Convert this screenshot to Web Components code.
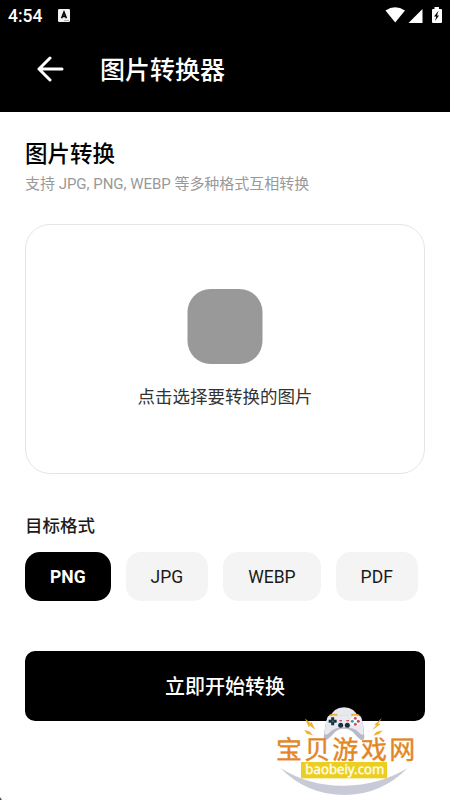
<!DOCTYPE html>
<html lang="zh-CN">
<head>
<meta charset="utf-8">
<title>图片转换器</title>
<style>
html,body{margin:0;height:100%;overflow:hidden;background:#fff}
body{font-family:Roboto,"Noto Sans CJK SC",sans-serif}
</style>
</head>
<body>
<converter-app></converter-app>
<script>
const define = (name, html) => {
  const t = document.createElement('template');
  t.innerHTML = html;
  customElements.define(name, class extends HTMLElement {
    constructor() {
      super();
      this.attachShadow({mode: 'open'}).appendChild(t.content.cloneNode(true));
    }
  });
};

define('status-bar', `<style>
:host{display:flex;box-sizing:border-box;height:30px;padding:0 8px 0 8px;align-items:center;justify-content:space-between;background:#000;color:#fff;font-weight:500;font-size:17.5px;line-height:30px}
div{display:flex;align-items:center;height:30px}
span{padding-top:2px}
svg{display:block}
</style>
<div><span>4:54</span>
<svg width="12" height="13" viewBox="0 0 12 13" style="margin-left:16px"><rect width="12" height="13" rx="1.3" fill="#f4f4f4"/><path d="M3.6 9.2 6 3.2l2.4 6M4.4 7.4h3.2" fill="none" stroke="#000" stroke-width="1.6"/><path d="M6 11.6h5" stroke="#999" stroke-width=".8"/></svg></div>
<svg width="57" height="18" viewBox="0 0 57 18"><path d="M.5 4.500Q10 -2 20 4.500L10.200 16.500Z" fill="#fff"/><path d="M23.500 17 37.500 3V17Z" fill="#fff"/><path d="M47.500 3h2V1h4.500v2h2q1 0 1 1v12q0 1-1 1h-8q-1 0-1-1V4Z" fill="#fff"/><path d="M53.500 4.800 49 10.500h2.300L50 15l4-5.500h-2Z" fill="#000"/></svg>`);

define('app-header', `<style>
:host{display:flex;box-sizing:border-box;height:82px;padding:0 0 4px 37px;align-items:center;background:#000;color:#fff}
h1{margin:0 0 0 36px;padding-top:4px;font-size:25px;line-height:36px;font-weight:500}
svg{display:block}
</style>
<svg width="27" height="26" viewBox="0 0 27 26"><path d="M25 13H2M13 2 2 13l11 11" fill="none" stroke="#fff" stroke-width="3" stroke-linecap="round" stroke-linejoin="round"/></svg>
<h1><slot></slot></h1>`);

define('page-intro', `<style>
:host{display:block}
h2{margin:0;padding-top:1px;font-size:22.5px;line-height:32px;font-weight:500;color:#000}
p{margin:0;padding-top:3px;font-size:15px;line-height:22px;color:#999;letter-spacing:-.02px}
</style><h2><slot name="title"></slot></h2><p><slot></slot></p>`);

define('upload-box', `<style>
:host{display:flex;box-sizing:border-box;height:250px;border:1.25px solid #e5e5e5;border-radius:25px;flex-direction:column;align-items:center;padding-top:64.5px;color:#333;font-size:17.5px;line-height:26px}
i{width:75px;height:75px;border-radius:23px;background:#999;margin-bottom:20px;transform:translateX(-.5px)}
</style><i></i><span><slot></slot></span>`);

define('format-chip', `<style>
:host{display:block;box-sizing:border-box;height:49px;padding:0 25px;border-radius:15px;background:#f4f4f4;color:#1a1a1a;font-size:17.5px;line-height:50px}
:host([selected]){background:#000;color:#fff;font-weight:700}
</style><slot></slot>`);

define('format-picker', `<style>
:host{display:block}
h3{margin:0 0 13px;padding-top:1px;font-size:17.5px;line-height:26px;font-weight:500;color:#1a1a1a}
div{display:flex;gap:15px}
</style><h3><slot name="label"></slot></h3><div><slot></slot></div>`);

define('primary-button', `<style>
:host{display:block}
button{display:block;width:100%;height:70px;border:0;border-radius:10px;padding:2px 0 0;background:#000;color:#fff;font:500 20px/68px Roboto,"Noto Sans CJK SC",sans-serif}
</style><button><slot></slot></button>`);

define('site-mark', `<style>
:host{position:absolute;left:265px;top:695px;width:160px;height:105px}
svg{display:block}
text{font-weight:400;text-rendering:geometricPrecision}
</style>
<svg width="160" height="105" viewBox="0 0 480 315">
<path d="M46 219Q134 274 238 272Q342 271 428 219Q348 300 238 300Q126 300 46 219Z" fill="#c8cad7"/>
<path d="M195 68Q204 38 237 37Q270 38 280 68Z" fill="#e9e9ed"/>
<path d="M188 67Q199 53 219 60Q237 65 255 60Q277 53 288 67Q297 88 298 128Q297 137 287 134Q278 128 264 111Q253 101 237 101Q220 101 210 111Q193 131 183 135Q176 137 176 128Q180 86 188 67Z" fill="#b9bac9"/>
<path d="M188 66Q199 52 219 59Q237 64 255 59Q277 52 288 66Q295 86 296 118Q289 122 277 108Q260 96 237 97Q214 96 198 109Q185 123 179 118Q181 84 188 66Z" fill="#e9e9f0"/>
<path d="M195 62q7-5 22-2M259 60q14-3 22 2" fill="none" stroke="#e7ad3e" stroke-width="6"/>
<path d="M203 67v24M191 79h24" stroke="#193341" stroke-width="9"/><circle cx="203" cy="79" r="3" fill="#526c78"/>
<circle cx="271" cy="79" r="15" fill="#fff"/><circle cx="271" cy="70" r="4.500" fill="#d84c59"/><circle cx="271" cy="88" r="4.500" fill="#d84c59"/><circle cx="262" cy="79" r="4.500" fill="#399aa8"/><circle cx="280" cy="79" r="4.500" fill="#b94c65"/>
<circle cx="227" cy="91" r="7.500" fill="#19313c"/><circle cx="247" cy="91" r="7.500" fill="#19313c"/><path d="M223 77h8M244 77h8" stroke="#d44c5b" stroke-width="4"/>
<g fill="#f3b51d" stroke="#e9962c" stroke-width="1"><path d="m121 72 17 14 1-5 10 21-15-11-2 5Z"/><path d="m349 71-20 18 6 1-11 13 21-15-6-2Z"/><path d="m119 106 15 4 8 9-16-3Z"/><path d="m351 107-18 5-6 9 16-5Z"/></g>
<g font-family="Noto Sans CJK SC, sans-serif" font-size="78" fill="#e28625" stroke="#e28625" stroke-width="1.2"><text x="33 118 202 288 373" y="191">宝贝游戏网</text></g>
<rect x="108" y="201" width="258" height="49" fill="#ebcf20"/>
<text x="121" y="237" textLength="237" lengthAdjust="spacingAndGlyphs" font-family="Noto Sans, sans-serif" font-size="41" fill="#fffdf1" stroke="#fffdf1" stroke-width="1">baobeiy.com</text>
</svg>`);

define('converter-app', `<style>
:host{display:block;position:relative;width:450px;height:800px;background:#fff;overflow:hidden}
main{padding:25px 25px 0}
upload-box{margin-top:28.500px}
format-picker{margin-top:38.500px}
primary-button{margin-top:50px}
.corner{position:absolute;left:0;bottom:0;display:block}
</style>
<status-bar></status-bar><app-header>图片转换器</app-header>
<main>
<page-intro><span slot="title">图片转换</span>支持 JPG, PNG, WEBP 等多种格式互相转换</page-intro>
<upload-box>点击选择要转换的图片</upload-box>
<format-picker><span slot="label">目标格式</span><format-chip selected>PNG</format-chip><format-chip>JPG</format-chip><format-chip>WEBP</format-chip><format-chip>PDF</format-chip></format-picker>
<primary-button>立即开始转换</primary-button>
</main>
<svg class="corner" width="3" height="3" viewBox="0 0 3 3"><path d="M0 0 2 3H0Z" fill="#555"/></svg>
<site-mark></site-mark>`);
</script>
</body>
</html>
